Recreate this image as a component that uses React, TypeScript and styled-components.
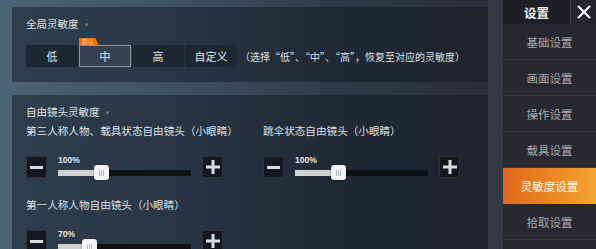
import styled, { createGlobalStyle } from "styled-components";

const GlobalStyle = createGlobalStyle`
  html, body {
    margin: 0;
    padding: 0;
    width: 596px;
    height: 249px;
    overflow: hidden;
    background: #2b2e39;
    font-family: "Noto Sans CJK SC", "Noto Sans", sans-serif;
  }
`;

const levels = ["低", "中", "高", "自定义"];
const menu = ["基础设置", "画面设置", "操作设置", "载具设置", "灵敏度设置", "拾取设置"];

function Slider({ label, percent, pos }: { label: string; percent: string; pos: number }) {
  return (
    <SliderBlock>
      <ItemLabel>{label}</ItemLabel>
      <SliderRow>
        <StepButton>
          <svg width="13" height="13" viewBox="0 0 13 13">
            <rect x="0" y="5" width="13" height="3" fill="#d9dcdf" />
          </svg>
        </StepButton>
        <TrackArea>
          <Percent>{percent}</Percent>
          <Track>
            <Fill style={{ width: `${pos}%` }} />
            <Thumb style={{ left: `${pos}%` }}>
              <i />
              <i />
              <i />
            </Thumb>
          </Track>
        </TrackArea>
        <StepButton>
          <svg width="14" height="14" viewBox="0 0 14 14">
            <rect x="0" y="5.5" width="14" height="3" fill="#d9dcdf" />
            <rect x="5.5" y="0" width="3" height="14" fill="#d9dcdf" />
          </svg>
        </StepButton>
      </SliderRow>
    </SliderBlock>
  );
}

export default function App() {
  return (
    <>
      <GlobalStyle />
      <Screen>
        <Main>
          <Panel $top={7} $height={75}>
            <Title>
              全局灵敏度<Dot />
            </Title>
            <LevelRow>
              {levels.map((l) => (
                <LevelButton key={l} $active={l === "中"}>
                  {l === "中" && <Badge>默认</Badge>}
                  {l}
                </LevelButton>
              ))}
              <Hint>（选择“低”、“中”、“高”，恢复至对应的灵敏度）</Hint>
            </LevelRow>
          </Panel>
          <Panel $top={13} $height={160}>
            <Title>
              自由镜头灵敏度<Dot />
            </Title>
            <SliderGrid>
              <Slider label="第三人称人物、载具状态自由镜头（小眼睛）" percent="100%" pos={33} />
              <Slider label="跳伞状态自由镜头（小眼睛）" percent="100%" pos={33} />
              <Slider label="第一人称人物自由镜头（小眼睛）" percent="70%" pos={24} />
            </SliderGrid>
          </Panel>
        </Main>
        <Gutter />
        <Sidebar>
          <SideHeader>
            <HeaderTitle>设置</HeaderTitle>
            <CloseBox>
              <svg width="16" height="16" viewBox="0 0 16 16">
                <path d="M2 2 L14 14 M14 2 L2 14" stroke="#f2f2f2" strokeWidth="2.2" />
              </svg>
            </CloseBox>
          </SideHeader>
          {menu.map((m) => (
            <MenuItem key={m} $active={m === "灵敏度设置"}>
              {m}
            </MenuItem>
          ))}
        </Sidebar>
      </Screen>
    </>
  );
}

const Screen = styled.div`
  display: flex;
  width: 596px;
  height: 249px;
  overflow: hidden;
  background: linear-gradient(90deg, #4b6478 0%, #3d5164 30%, #313a4a 55%, #2b2e3a 80%);
`;

const Main = styled.div`
  width: 488px;
  padding-left: 12px;
  box-sizing: border-box;
  display: flex;
  flex-direction: column;
`;

const Panel = styled.section<{ $top: number; $height: number }>`
  margin-top: ${({ $top }) => $top}px;
  height: ${({ $height }) => $height}px;
  flex-shrink: 0;
  background: rgba(16, 22, 34, 0.48);
  padding: 10px 14px 0;
  box-sizing: border-box;
`;

const Title = styled.div`
  display: flex;
  align-items: center;
  color: #dde1e5;
  font-size: 10.5px;
  line-height: 14px;
  height: 14px;
`;

const Dot = styled.span`
  width: 3px;
  height: 3px;
  border-radius: 50%;
  background: #6b7886;
  margin-left: 6px;
`;

const LevelRow = styled.div`
  display: flex;
  align-items: center;
  margin-top: 14px;
  gap: 1px;
`;

const LevelButton = styled.div<{ $active?: boolean }>`
  position: relative;
  width: 52px;
  height: 22px;
  box-sizing: border-box;
  display: flex;
  align-items: center;
  justify-content: center;
  font-size: 11px;
  color: #e3e6e9;
  background: ${({ $active }) => ($active ? "#344152" : "#1c2734")};
  border: 1px solid ${({ $active }) => ($active ? "#8c949c" : "transparent")};
`;

const Badge = styled.span`
  position: absolute;
  left: -1px;
  top: -8px;
  height: 8px;
  padding: 0 5px 0 3px;
  background: #e8731a;
  color: #f7d7b8;
  font-size: 6px;
  line-height: 8px;
  clip-path: polygon(0 0, 82% 0, 100% 100%, 0 100%);
`;

const Hint = styled.span`
  margin-left: 2px;
  color: #dfe2e6;
  font-size: 10px;
  white-space: nowrap;
`;

const SliderGrid = styled.div`
  display: grid;
  grid-template-columns: 197px 197px;
  column-gap: 40px;
  row-gap: 20px;
  margin-top: 5px;
`;

const SliderBlock = styled.div`
  display: flex;
  flex-direction: column;
`;

const ItemLabel = styled.div`
  color: #dce0e4;
  font-size: 10.6px;
  line-height: 14px;
  white-space: nowrap;
`;

const SliderRow = styled.div`
  display: flex;
  align-items: flex-start;
  margin-top: 18px;
`;

const StepButton = styled.div`
  width: 21px;
  height: 22px;
  flex-shrink: 0;
  background: #14181e;
  border: 1px solid #2c333c;
  box-sizing: border-box;
  display: flex;
  align-items: center;
  justify-content: center;
`;

const TrackArea = styled.div`
  flex: 1;
  margin: 0 11px;
  display: flex;
  flex-direction: column;
`;

const Percent = styled.span`
  color: #e6e8eb;
  font-family: "Liberation Sans", Arial, sans-serif;
  font-weight: bold;
  font-size: 8.5px;
  line-height: 9px;
  height: 9px;
`;

const Track = styled.div`
  position: relative;
  margin-top: 5px;
  height: 6px;
  background: #0f1114;
  border-radius: 1px;
`;

const Fill = styled.div`
  height: 100%;
  background: #cfd2d5;
`;

const Thumb = styled.div`
  position: absolute;
  top: -5px;
  width: 15px;
  height: 15px;
  margin-left: -8px;
  background: #f4f4f4;
  border-radius: 3px;
  display: flex;
  align-items: center;
  justify-content: center;
  gap: 1px;
  box-shadow: 0 0 2px rgba(0, 0, 0, 0.5);

  i {
    width: 1px;
    height: 6px;
    background: #b8bbbe;
  }
`;

const Gutter = styled.div`
  width: 15px;
  background: #353842;
`;

const Sidebar = styled.nav`
  width: 93px;
  background: #26282e;
  display: flex;
  flex-direction: column;
`;

const SideHeader = styled.div`
  display: flex;
  height: 24px;
  background: #1e2025;
`;

const HeaderTitle = styled.div`
  width: 67px;
  display: flex;
  align-items: center;
  justify-content: center;
  color: #f2f3f4;
  font-size: 12.5px;
  font-weight: bold;
`;

const CloseBox = styled.div`
  flex: 1;
  border-left: 1px solid #3b3e44;
  display: flex;
  align-items: center;
  justify-content: center;
  background: #24262b;
`;

const MenuItem = styled.div<{ $active?: boolean }>`
  height: 36px;
  flex-shrink: 0;
  display: flex;
  align-items: center;
  justify-content: center;
  font-size: 11.5px;
  color: ${({ $active }) => ($active ? "#ffffff" : "#a8abb0")};
  background: ${({ $active }) =>
    $active ? "linear-gradient(90deg, #e0691a 0%, #ec8a26 60%, #f3a634 100%)" : "transparent"};
  border-bottom: 1px solid ${({ $active }) => ($active ? "transparent" : "#35373d")};
  box-sizing: border-box;
`;
